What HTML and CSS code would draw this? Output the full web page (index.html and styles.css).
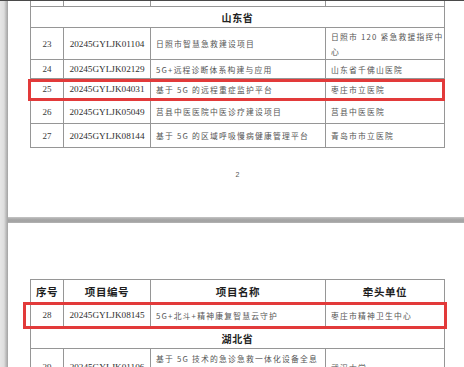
FILE: index.html
```html
<!DOCTYPE html>
<html lang="zh-CN">
<head>
<meta charset="utf-8">
<title>2024 5G 医疗项目名单</title>
<link rel="stylesheet" href="styles.css">
</head>
<body>
<div class="topline"></div>
<div class="main">
  <div class="strip"></div>
  <div class="pages">
    <section class="page page-1">
      <div class="table-wrap">
        <table class="grid">
          <colgroup><col class="c1"><col class="c2"><col class="c3"><col class="c4"></colgroup>
          <tr class="r-cut"><td></td><td></td><td></td><td></td></tr>
          <tr class="r-prov"><td colspan="4" class="prov">山东省</td></tr>
          <tr class="r-23"><td class="num">23</td><td class="code">20245GYLJK01104</td><td class="txt">日照市智慧急救建设项目</td><td class="txt">日照市 120 紧急救援指挥中<br>心</td></tr>
          <tr class="r-24"><td class="num">24</td><td class="code">20245GYLJK02129</td><td class="txt">5G+远程诊断体系构建与应用</td><td class="txt">山东省千佛山医院</td></tr>
          <tr class="r-25"><td class="num">25</td><td class="code">20245GYLJK04031</td><td class="txt">基于 5G 的远程重症监护平台</td><td class="txt">枣庄市立医院</td></tr>
          <tr class="r-26"><td class="num">26</td><td class="code">20245GYLJK05049</td><td class="txt">莒县中医医院中医诊疗建设项目</td><td class="txt">莒县中医医院</td></tr>
          <tr class="r-27"><td class="num">27</td><td class="code">20245GYLJK08144</td><td class="txt">基于 5G 的区域呼吸慢病健康管理平台</td><td class="txt">青岛市市立医院</td></tr>
        </table>
        <div class="mark mark-25"></div>
      </div>
      <div class="pageno">2</div>
    </section>
    <div class="break"></div>
    <section class="page page-2">
      <div class="table-wrap">
        <table class="grid">
          <colgroup><col class="c1"><col class="c2"><col class="c3"><col class="c4"></colgroup>
          <tr class="r-head"><th>序号</th><th>项目编号</th><th>项目名称</th><th>牵头单位</th></tr>
          <tr class="r-28"><td class="num">28</td><td class="code">20245GYLJK08145</td><td class="txt">5G+北斗+精神康复智慧云守护</td><td class="txt">枣庄市精神卫生中心</td></tr>
          <tr class="r-prov2"><td colspan="4" class="prov">湖北省</td></tr>
          <tr class="r-29"><td class="num">29</td><td class="code">20245GYLJK01106</td><td class="txt">基于 5G 技术的急诊急救一体化设备全息<br>化管理平台</td><td class="txt">武汉大学</td></tr>
        </table>
        <div class="mark mark-28"></div>
      </div>
    </section>
  </div>
</div>
</body>
</html>
```
FILE: styles.css
```css
html, body {
  margin: 0;
  padding: 0;
}
body {
  width: 464px;
  height: 367px;
  overflow: hidden;
  background: #ffffff;
  font-family: "Liberation Serif", "Noto Sans CJK SC", serif;
  color: #333;
}
.topline {
  height: 1px;
  background: #4a4a4a;
}
.main {
  display: flex;
  height: 366px;
}
.strip {
  flex: none;
  width: 8px;
  background: linear-gradient(to right, #e6e6e6 0, #dedede 50%, #c4c4c4 70%, #a2a2a2 100%);
}
.pages {
  flex: 1;
  display: flex;
  flex-direction: column;
}
.page {
  background: #ffffff;
  flex: none;
}
.page-1 {
  height: 216px;
}
.break {
  flex: none;
  height: 6px;
  background: linear-gradient(#c6c6c6 0, #a9a9a9 35%, #a2a2a2 70%, #b4b4b4 100%);
}
.page-2 {
  flex: 1;
  padding-top: 56px;
}
.table-wrap {
  position: relative;
  margin-left: 22px;
  width: 415px;
}
.grid {
  border-collapse: collapse;
  table-layout: fixed;
  width: 415px;
}
.c1 { width: 33px; }
.c2 { width: 87px; }
.c3 { width: 175px; }
.c4 { width: 119px; }
.grid td, .grid th {
  border: 1px solid #969696;
  padding: 0 5px;
  vertical-align: middle;
  overflow: hidden;
  white-space: nowrap;
}
.grid th {
  font-family: "Noto Sans CJK SC", sans-serif;
  font-weight: 700;
  font-size: 10.5px;
  letter-spacing: 0.6px;
  color: #1e1e1e;
  text-align: center;
}
.r-cut td {
  border-top: none;
  height: 5px;
}
.prov {
  font-family: "Noto Sans CJK SC", sans-serif;
  font-weight: 700;
  font-size: 10px;
  letter-spacing: 0.6px;
  color: #222;
  text-align: center;
}
.num {
  text-align: center;
  font-size: 9px;
  color: #3a3a3a;
}
.code {
  text-align: center;
  font-size: 9.2px;
  color: #2e2e2e;
}
.txt {
  font-family: "Noto Sans CJK SC", sans-serif;
  font-size: 7.8px;
  letter-spacing: 1.2px;
  line-height: 15px;
  color: #555;
}
.r-prov td { height: 20px; }
.r-23 td { height: 31px; }
.r-24 td { height: 18px; }
.r-25 td { height: 20px; }
.r-26 td { height: 23px; }
.r-27 td { height: 23px; }
.r-head th { height: 22px; }
.r-28 td { height: 24px; }
.r-prov2 td { height: 20px; }
.r-29 td { height: 34px; vertical-align: top; padding-top: 2px; }
.r-29 .num, .r-29 .code, .r-29 .txt:last-child { vertical-align: middle; padding-top: 0; }
.pageno {
  margin-top: 23px;
  padding-left: 3px;
  text-align: center;
  font-family: "Liberation Sans", sans-serif;
  font-size: 7px;
  color: #555;
}
.mark {
  position: absolute;
  box-sizing: border-box;
  border: 3px solid #e23a3a;
}
.mark-25 {
  left: -2px;
  top: 78px;
  width: 417px;
  height: 22px;
}
.mark-28 {
  left: -7px;
  top: 23px;
  width: 424px;
  height: 27px;
}
```
